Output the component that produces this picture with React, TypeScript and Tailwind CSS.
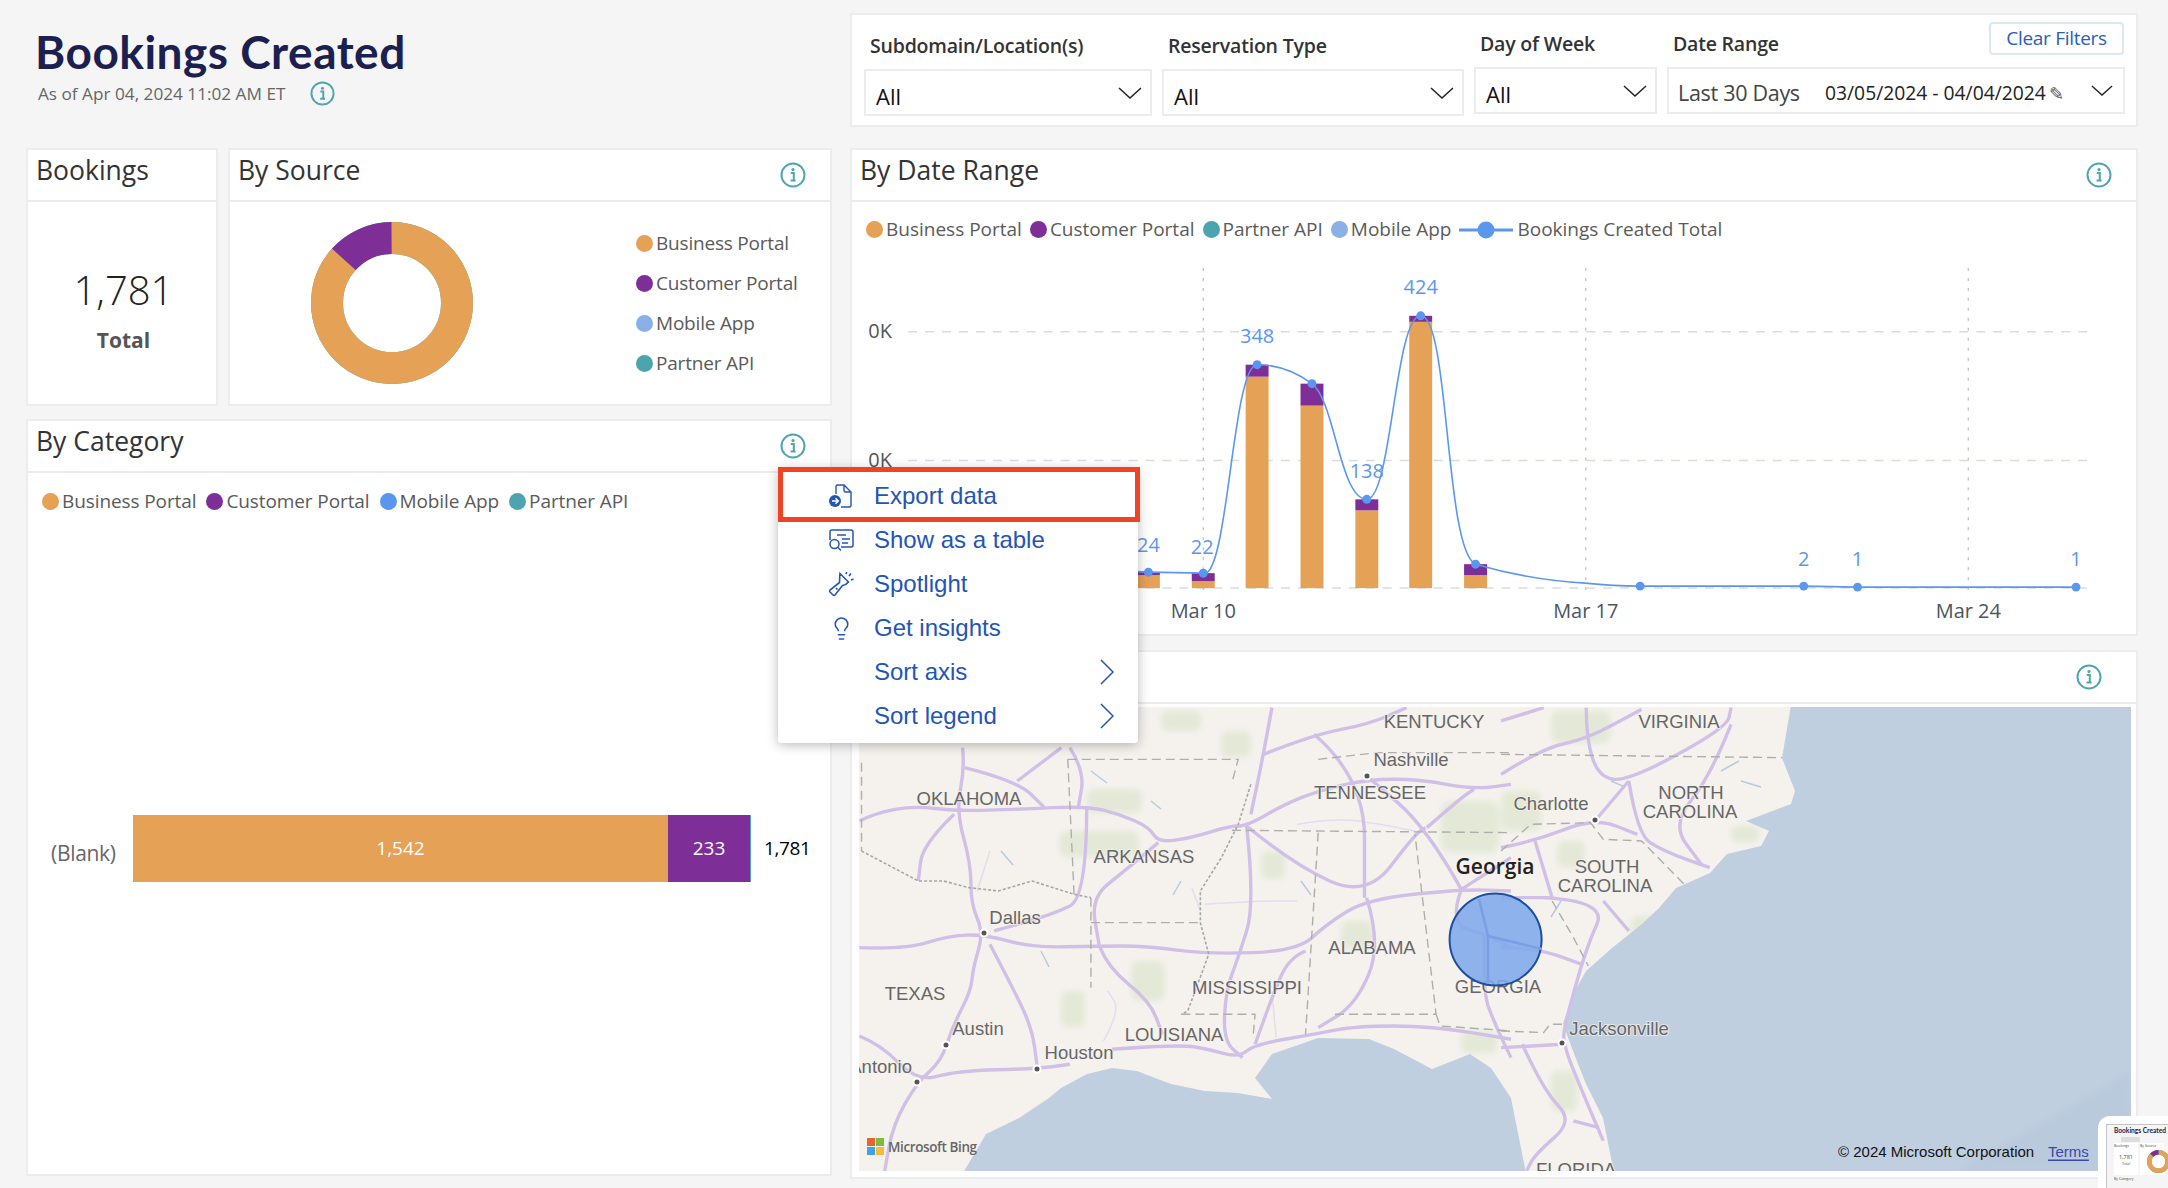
import { Lightbulb } from "lucide-react";

const ORANGE = "#e5a156";
const PURPLE = "#7e2e97";
const TEAL = "#4ca5ae";
const LINE = "#5b97ef";

function InfoIcon({ className }: { className?: string }) {
  return (
    <svg viewBox="0 0 26 26" className={className} fill="none">
      <circle cx="13" cy="13" r="11.5" stroke="#4fa3b5" strokeWidth="2" />
      <circle cx="13" cy="7.6" r="1.6" fill="#4fa3b5" />
      <path d="M10.8 11h3v7.2M10.6 18.4h5" stroke="#4fa3b5" strokeWidth="2" />
    </svg>
  );
}

function Chevron({ className }: { className?: string }) {
  return (
    <svg viewBox="0 0 24 12" className={className} fill="none">
      <path d="M1 1l11 10L23 1" stroke="#222" strokeWidth="1.5" />
    </svg>
  );
}

function LegendItem({ color, label }: { color: string; label: string }) {
  return (
    <div className="flex items-center gap-[3px]">
      <span className="w-[17px] h-[17px] rounded-full" style={{ background: color }} />
      <span>{label}</span>
    </div>
  );
}

function PanelHeader({ title, info }: { title: string; info?: boolean }) {
  return (
    <div className="h-[52px] shrink-0 border-b-2 border-[#ececec] flex items-center justify-between pl-[8px] pr-[24px]">
      <span className="text-[26.5px] leading-none text-[#333] -mt-[9px]">{title}</span>
      {info && <InfoIcon className="w-[26px] h-[26px]" />}
    </div>
  );
}

function FilterSelect({ label, width, top }: { label: string; width: string; top: string }) {
  return (
    <div className={`${width} ${top}`}>
      <div className="pl-[6px] h-[33px] text-[19.5px] leading-[28px] font-semibold text-[#333] tracking-[-0.2px]">{label}</div>
      <div className="mt-[4px] h-[47px] bg-white border-2 border-[#ececec] flex items-center justify-between pl-[10px] pr-[8px]">
        <span className="text-[22px] text-[#111] mt-[7px]">All</span>
        <Chevron className="w-[24px] h-[12px]" />
      </div>
    </div>
  );
}

// road and border lines are written in the crop coordinates of each half of the map
const westRoads = [
  "M20 390L60 365 150 345 250 360 400 355 560 345 640 370 710 410 730 455 810 440 900 405 940 405 1030 340 1110 300 1227 265 1350 265 1480 295 1568 280",
  "M265 170L270 230 250 360 285 520 285 640 315 725 290 830 285 900 240 1010 215 1110 158 1173 100 1300 80 1440",
  "M270 230L395 270 460 350M395 270L500 170M245 370L170 460 160 570",
  "M20 770L130 775 230 735 315 730 430 770 590 765 700 765 850 790 1060 780 1130 700 1225 625 1450 595 1568 600",
  "M330 760L380 880 430 1010 443 1133M20 1035L70 1060 158 1173 250 1140 443 1133 520 1120",
  "M620 1075L780 1060 850 1075 920 1100 960 1060 1100 1030 1200 1005 1380 1005 1568 1045",
  "M590 765L610 830 710 930 740 1030M940 405L960 640 920 800 890 900 885 1050 930 1100",
  "M940 405L1050 520 1225 620 1340 430 1365 410M1225 620L1260 760 1200 940 1110 1010",
  "M980 190L1100 130 1230 100 1320 50M1100 130L1220 260 1220 620M1000 50L980 190 950 370",
  "M1450 595L1368 410 1230 260M1368 410L1450 320 1480 295M1450 595L1568 500M1450 595L1420 700 1510 730 1568 770",
  "M560 345L560 620 480 670 340 720M730 455L650 540 570 620 590 765M520 170L555 240 540 350",
  "M1080 780L1040 800 1000 920 960 1060M1505 730L1500 900 1530 1000 1568 1100",
];
const eastRoads = [
  "M0 250L100 170 200 145 330 55M200 50L200 145 230 260 300 270 530 110 540 50M300 270L320 430 380 480 490 530",
  "M220 390L300 270M0 470L80 450 220 380 320 430M100 620L250 630 200 770 150 1000 145 1060 200 1230 240 1350",
  "M0 620L120 620M0 770L80 770 190 820M0 1070L145 1060M50 1060L100 1200 170 1290 80 1390 60 1440M170 1290L230 1310",
  "M240 630L300 720M540 100L490 260 400 400 470 520M80 450L120 620M0 90L100 50",
];
const thinRoads = [
  "M840 640L960 630 1060 630M1060 400L1150 380 1260 400 1340 420M330 480L300 600M810 590L830 660",
  "M600 1050L640 960 610 900M1000 900L1010 1040",
];
const westBorders = [
  "M25 215L25 480M515 205L920 205 905 275M515 205L530 610M570 620L570 890M570 695L830 695",
  "M785 970L960 970 955 1040M905 418L1100 420 1568 425M1110 425L1080 1030M1150 970L1390 970 1340 430M1390 970L1400 1005 1568 1020M1110 205L1250 185 1568 185",
];
const westRivers = [
  "M25 480L100 530 160 570 220 570 280 590 350 600 430 570 530 610 570 620",
  "M950 280L920 400 880 500 830 600 830 695 850 790 800 960 785 970",
];
const eastBorders = [
  "M0 190L660 200M0 480L70 400 210 395 240 445 330 450 430 580M120 630L170 740 205 825M0 1020L100 1025 115 1000 145 1000",
];

// turns a polyline into a rounded path, so the roads bend instead of kinking
function smooth(d: string) {
  return d
    .split("M")
    .filter(Boolean)
    .map((part) => {
      const nums = part.replace("L", " ").trim().split(/\s+/).map(Number);
      const pts: number[][] = [];
      for (let i = 0; i < nums.length; i += 2) pts.push([nums[i], nums[i + 1]]);
      let out = `M${pts[0][0]} ${pts[0][1]}`;
      for (let i = 1; i < pts.length - 1; i++) {
        const mx = (pts[i][0] + pts[i + 1][0]) / 2;
        const my = (pts[i][1] + pts[i + 1][1]) / 2;
        out += `Q${pts[i][0]} ${pts[i][1]} ${mx} ${my}`;
      }
      const last = pts[pts.length - 1];
      return `${out}L${last[0]} ${last[1]}`;
    })
    .join("");
}

function MapLabel({ x, y, children, anchor = "middle" }: { x: number; y: number; children: string; anchor?: "middle" | "end" | "start" }) {
  return (
    <text x={x} y={y} textAnchor={anchor} dominantBaseline="central" fontSize="18.5" fill="#666" stroke="#f5f2ee" strokeOpacity="0.7" strokeWidth="2" paintOrder="stroke" fontFamily="'Liberation Sans', sans-serif">
      {children}
    </text>
  );
}

function CityDot({ x, y }: { x: number; y: number }) {
  return <circle cx={x} cy={y} r="3.5" fill="#555" stroke="#fff" strokeWidth="2" />;
}

function MapDrawing() {
  return (
    <svg viewBox="858 706 1272 464" className="w-full h-full block">
      <defs>
        <filter id="soft" x="-5%" y="-5%" width="110%" height="110%">
          <feGaussianBlur stdDeviation="0.7" />
        </filter>
        <filter id="softer" x="-20%" y="-20%" width="140%" height="140%">
          <feGaussianBlur stdDeviation="3" />
        </filter>
      </defs>
      <rect x="858" y="706" width="1272" height="464" fill="#f5f2ee" />
      <g fill="#e3e9d6" filter="url(#softer)">
        <rect x="1086" y="788" width="55" height="24" rx="6" />
        <rect x="1058" y="830" width="80" height="26" rx="8" />
        <rect x="1160" y="710" width="40" height="20" rx="6" />
        <rect x="1220" y="730" width="30" height="26" rx="6" />
        <rect x="1060" y="990" width="24" height="36" rx="6" />
        <rect x="1130" y="960" width="34" height="40" rx="8" />
        <rect x="1260" y="850" width="24" height="28" rx="6" />
        <rect x="1340" y="920" width="32" height="28" rx="6" />
        <rect x="1440" y="800" width="58" height="52" rx="10" />
        <rect x="1500" y="790" width="40" height="40" rx="8" />
        <rect x="1550" y="710" width="60" height="32" rx="8" />
        <rect x="1556" y="840" width="28" height="26" rx="6" />
        <rect x="1630" y="915" width="26" height="24" rx="6" />
        <rect x="1730" y="825" width="28" height="16" rx="5" />
        <rect x="1550" y="1070" width="26" height="40" rx="6" />
        <rect x="1460" y="1030" width="36" height="22" rx="6" />
      </g>
      <path
        fill="#c0cfe0"
        filter="url(#soft)"
        d="M962 1172L985 1133 1018 1117 1048 1097 1060 1087 1086 1073 1111 1067 1136 1070 1170 1083 1204 1090 1237 1092 1271 1098 1254 1077 1271 1053 1317 1037 1368 1038 1393 1048 1431 1068 1469 1053 1490 1067 1510 1097 1525 1172 1613 1172 1602 1117 1585 1083 1572 1050 1562 1023 1570 997 1585 970 1611 947 1641 923 1658 907 1675 887 1709 872 1726 853 1760 845 1768 830 1745 820 1790 803 1794 790 1781 757 1790 704 2132 704 2132 1172Z"
      />
      <path fill="#b5c6da" fillOpacity="0.5" filter="url(#softer)" d="M1950 1172L2130 1070 2130 1172Z" />
      <g fill="none" stroke="#b5cbe2" strokeWidth="1.5" filter="url(#soft)">
        <path d="M1090 770l16 12M1150 800l10 8M1000 850l12 14M1040 950l8 16M1300 880l10 14M1720 770l18 -10M1740 780l20 6M1120 720l14 10M1180 880l-8 14M1610 780l14 6M1560 900l-10 16" />
      </g>
      <g transform="translate(850 690) scale(0.4209 0.3333)" fill="none" filter="url(#soft)" strokeLinejoin="round">
        {thinRoads.map((d) => (
          <path key={d} d={smooth(d)} stroke="#e6daf0" strokeWidth="1.5" vectorEffect="non-scaling-stroke" />
        ))}
        {westRoads.map((d) => (
          <path key={d} d={smooth(d)} stroke="#d0c0e7" strokeWidth="3.4" vectorEffect="non-scaling-stroke" />
        ))}
        {westBorders.map((d) => (
          <path key={d} d={d} stroke="#aeaeaa" strokeWidth="1.4" strokeDasharray="9 5" vectorEffect="non-scaling-stroke" />
        ))}
        {westRivers.map((d) => (
          <path key={d} d={d} stroke="#a4a8a4" strokeWidth="1.6" strokeDasharray="3 2" vectorEffect="non-scaling-stroke" />
        ))}
      </g>
      <g transform="translate(1500 690) scale(0.4261 0.3333)" fill="none" filter="url(#soft)" strokeLinejoin="round">
        {eastRoads.map((d) => (
          <path key={d} d={smooth(d)} stroke="#d0c0e7" strokeWidth="3.4" vectorEffect="non-scaling-stroke" />
        ))}
        {eastBorders.map((d) => (
          <path key={d} d={d} stroke="#aeaeaa" strokeWidth="1.4" strokeDasharray="9 5" vectorEffect="non-scaling-stroke" />
        ))}
      </g>
      <CityDot x={1366} y={775} />
      <CityDot x={983} y={932} />
      <CityDot x={945} y={1044} />
      <CityDot x={1036} y={1068} />
      <CityDot x={916} y={1081} />
      <CityDot x={1594} y={819} />
      <CityDot x={1561} y={1042} />
      <MapLabel x={1433} y={720}>KENTUCKY</MapLabel>
      <MapLabel x={1410} y={758}>Nashville</MapLabel>
      <MapLabel x={1369} y={791}>TENNESSEE</MapLabel>
      <MapLabel x={968} y={797}>OKLAHOMA</MapLabel>
      <MapLabel x={1143} y={855}>ARKANSAS</MapLabel>
      <MapLabel x={1014} y={916}>Dallas</MapLabel>
      <MapLabel x={1371} y={946}>ALABAMA</MapLabel>
      <MapLabel x={914} y={992}>TEXAS</MapLabel>
      <MapLabel x={1246} y={986}>MISSISSIPPI</MapLabel>
      <MapLabel x={1497} y={985}>GEORGIA</MapLabel>
      <MapLabel x={977} y={1027}>Austin</MapLabel>
      <MapLabel x={1173} y={1033}>LOUISIANA</MapLabel>
      <MapLabel x={1078} y={1051}>Houston</MapLabel>
      <MapLabel x={911} y={1065} anchor="end">San Antonio</MapLabel>
      <MapLabel x={1678} y={720}>VIRGINIA</MapLabel>
      <MapLabel x={1550} y={802}>Charlotte</MapLabel>
      <MapLabel x={1690} y={791}>NORTH</MapLabel>
      <MapLabel x={1689} y={810}>CAROLINA</MapLabel>
      <MapLabel x={1606} y={865}>SOUTH</MapLabel>
      <MapLabel x={1604} y={884}>CAROLINA</MapLabel>
      <MapLabel x={1618} y={1027}>Jacksonville</MapLabel>
      <MapLabel x={1575} y={1168}>FLORIDA</MapLabel>
      <text x={1494} y={865} textAnchor="middle" dominantBaseline="central" fontSize="21" fontWeight="600" fill="#222" fontFamily="'Open Sans', sans-serif">
        Georgia
      </text>
      <circle cx="1494.6" cy="938.5" r="46" fill="#7fa8ea" fillOpacity="0.88" stroke="#1d4f9e" strokeWidth="2" />
      <path d="M1478 898L1487 935 1487 983M1487 935L1541 948" fill="none" stroke="#7a9fe4" strokeWidth="2.5" />
      <rect x="866" y="1137" width="8" height="8" fill="#e2672f" />
      <rect x="875" y="1137" width="8" height="8" fill="#7fba42" />
      <rect x="866" y="1146" width="8" height="8" fill="#3fa4e6" />
      <rect x="875" y="1146" width="8" height="8" fill="#f6bb3a" />
      <text x="887" y="1146" dominantBaseline="central" fontSize="13.5" fontWeight="600" letterSpacing="-0.4" fill="#666" fontFamily="'Open Sans', sans-serif">
        Microsoft Bing
      </text>
      <text x="1837" y="1150" dominantBaseline="central" fontSize="15" fill="#111" fontFamily="'Liberation Sans', sans-serif">
        © 2024 Microsoft Corporation
      </text>
      <text x="2047" y="1150" dominantBaseline="central" fontSize="15" fill="#3a46a8" textDecoration="underline" fontFamily="'Liberation Sans', sans-serif">
        Terms
      </text>
    </svg>
  );
}

const bars = [
  { x: 1148, top: 572, split: 575 },
  { x: 1203, top: 573, split: 581 },
  { x: 1257, top: 364, split: 376 },
  { x: 1312, top: 383, split: 405 },
  { x: 1367, top: 499, split: 510 },
  { x: 1421, top: 315, split: 321 },
  { x: 1476, top: 564, split: 575 },
];

const points = [
  [1148, 572],
  [1203, 573],
  [1257, 364],
  [1312, 383],
  [1367, 499],
  [1421, 315],
  [1476, 564],
  [1641, 586],
  [1805, 586],
  [1859, 587],
  [2078, 587],
];

const dataLabels = [
  { x: 1148, y: 544, t: "24" },
  { x: 1202, y: 546, t: "22" },
  { x: 1257, y: 335, t: "348" },
  { x: 1367, y: 470, t: "138" },
  { x: 1421, y: 286, t: "424" },
  { x: 1805, y: 558, t: "2" },
  { x: 1859, y: 558, t: "1" },
  { x: 2078, y: 558, t: "1" },
];

function DateChart() {
  return (
    <svg viewBox="853 245 1283 389" className="w-full h-[389px] block" fontFamily="'Open Sans', sans-serif">
      {[331, 460, 588].map((y) => (
        <line key={y} x1="907" x2="2093" y1={y} y2={y} stroke="#d9dce4" strokeWidth="1.5" strokeDasharray="9 8" />
      ))}
      {[1203, 1586.5, 1970].map((x) => (
        <line key={x} x1={x} x2={x} y1="267" y2="593" stroke="#bdbdbd" strokeWidth="1.2" strokeDasharray="3 7" />
      ))}
      {bars.map((b) => (
        <g key={b.x}>
          <rect x={b.x - 11.5} y={b.split} width="23" height={588 - b.split} fill={ORANGE} />
          <rect x={b.x - 11.5} y={b.top} width="23" height={b.split - b.top} fill={PURPLE} />
        </g>
      ))}
      <path
        fill="none"
        stroke={LINE}
        strokeWidth="1.6"
        d="M1120 571L1148 572 1203 573C1228 580 1232 364 1257 364C1277 364 1297 372 1312 383C1335 400 1340 499 1367 499C1392 499 1395 315 1421 315C1450 315 1445 550 1476 564C1510 574 1550 581 1586 583C1605 585 1620 586 1641 586L1805 586 1859 587 2078 587"
      />
      {points.map(([x, y]) => (
        <circle key={x} cx={x} cy={y} r="4.5" fill={LINE} />
      ))}
      {dataLabels.map((l) => (
        <text key={l.x} x={l.x} y={l.y} textAnchor="middle" dominantBaseline="central" fontSize="20" fill={LINE}>
          {l.t}
        </text>
      ))}
      <text x="879" y="330" textAnchor="middle" dominantBaseline="central" fontSize="20" fill="#555">0K</text>
      <text x="879" y="459" textAnchor="middle" dominantBaseline="central" fontSize="20" fill="#555">0K</text>
      <text x="1203" y="610" textAnchor="middle" dominantBaseline="central" fontSize="20" fill="#4a5560">Mar 10</text>
      <text x="1586.5" y="610" textAnchor="middle" dominantBaseline="central" fontSize="20" fill="#4a5560">Mar 17</text>
      <text x="1970" y="610" textAnchor="middle" dominantBaseline="central" fontSize="20" fill="#4a5560">Mar 24</text>
    </svg>
  );
}

function Donut({ className }: { className: string }) {
  const r = 65;
  const c = 2 * Math.PI * r;
  const orange = c * (1542 / 1781);
  const purple = c * (233 / 1781);
  return (
    <svg viewBox="0 0 162 162" className={className}>
      <g transform="rotate(-90 81 81)" fill="none" strokeWidth="32">
        <circle cx="81" cy="81" r={r} stroke={TEAL} />
        <circle cx="81" cy="81" r={r} stroke={ORANGE} strokeDasharray={`${orange} ${c}`} />
        <circle cx="81" cy="81" r={r} stroke={PURPLE} strokeDasharray={`${purple} ${c}`} strokeDashoffset={-orange} />
      </g>
    </svg>
  );
}

function MenuIcon({ kind }: { kind: string }) {
  if (kind === "export") {
    return (
      <svg viewBox="0 0 26 26" className="w-[26px] h-[26px]" fill="none" stroke="#2255b5" strokeWidth="1.4">
        <path d="M8 11V3.5a1.5 1.5 0 011.5-1.5H16l7 7v13.5a1.5 1.5 0 01-1.5 1.5H13M16 2v5.5A1.5 1.5 0 0017.5 9H23" />
        <circle cx="7" cy="18" r="6" fill="#2255b5" stroke="none" />
        <path d="M4 18h6M7.5 15.2L10.3 18l-2.8 2.8" stroke="#fff" strokeWidth="1.5" />
      </svg>
    );
  }
  if (kind === "table") {
    return (
      <svg viewBox="0 0 26 24" className="w-[26px] h-[24px]" fill="none" stroke="#2255b5" strokeWidth="1.5">
        <path d="M2 12V4a2 2 0 012-2h19a2 2 0 012 2v13a2 2 0 01-2 2H13" />
        <path d="M9 7h9M14 11h8M14 15h6" />
        <circle cx="6.5" cy="16" r="4.5" />
        <path d="M10 19.5l3 3" />
      </svg>
    );
  }
  if (kind === "spot") {
    return (
      <svg viewBox="0 0 26 26" className="w-[26px] h-[26px]" fill="none" stroke="#2255b5" strokeWidth="1.6">
        <path d="M12 2.5l8.5 8.5c-1.5 2-3.5 3-6 3.5L7 24a1.5 1.5 0 01-2 0l-3-3a1.5 1.5 0 010-2l9.5-7.5c.3-3 0-6 .5-9z" />
        <path d="M21 5l2-2.5M23 9l2.5-1M18 3l.8-2" />
        <path d="M8 17l1.5 1.5" />
      </svg>
    );
  }
  return <Lightbulb className="w-[25px] h-[25px] ml-[1px] text-[#2255b5]" strokeWidth={1.5} />;
}

const menuItems = [
  { label: "Export data", icon: "export" },
  { label: "Show as a table", icon: "table" },
  { label: "Spotlight", icon: "spot" },
  { label: "Get insights", icon: "bulb" },
  { label: "Sort axis", more: true },
  { label: "Sort legend", more: true },
];

function ContextMenu() {
  return (
    <div className="absolute left-[778px] top-[468px] w-[360px] bg-white rounded-[3px] shadow-[0_2px_12px_rgba(0,0,0,0.28)] pt-[6px] pb-[5px] font-['Liberation_Sans',sans-serif] text-[24px] text-[#2255b5]">
      {menuItems.map((m) => (
        <div key={m.label} className="h-[44px] flex items-center">
          <div className="w-[96px] pl-[50px] flex justify-start">{m.icon && <MenuIcon kind={m.icon} />}</div>
          <span className="flex-1">{m.label}</span>
          {m.more && (
            <svg viewBox="0 0 14 26" className="w-[14px] h-[26px] mr-[24px]" fill="none" stroke="#2255b5" strokeWidth="1.5">
              <path d="M1 1l12 12L1 25" />
            </svg>
          )}
        </div>
      ))}
      <div className="absolute left-0 -top-[1px] w-[362px] h-[55px] border-[5px] border-[#ee4324]" />
    </div>
  );
}

function Thumbnail() {
  return (
    <div className="absolute left-[2098px] top-[1116px] w-[70px] h-[72px] overflow-hidden bg-white rounded-tl-[12px] pl-[8px] pt-[8px]">
      <div className="w-[62px] h-[64px] bg-[#f5f5f5] border-l border-t border-[#c4c4c4] pl-[7px] pt-[1px] text-[#444] overflow-hidden">
        <div className="w-[50px] text-[6.6px] leading-[9px] font-bold text-[#1b2050] whitespace-nowrap font-['Lato',sans-serif]">Bookings Created</div>
        <div className="mt-[2px] ml-[7px] w-[19px] h-[5px] bg-[#ddd] rounded-[1px]" />
        <div className="mt-[1px] flex gap-[2px]">
          <div className="w-[24px] h-[32px] bg-white text-center">
            <div className="text-[3.5px] leading-[5px] text-left">Bookings</div>
            <div className="mt-[6px] text-[5.5px] leading-[7px]">1,781</div>
            <div className="text-[3.5px] leading-[5px]">Total</div>
          </div>
          <div className="w-[24px] h-[32px] bg-white relative">
            <div className="text-[3.5px] leading-[5px]">By Source</div>
            <Donut className="absolute left-[7px] top-[7px] w-[23px] h-[23px]" />
          </div>
        </div>
        <div className="mt-[1px] text-[3.5px] leading-[5px]">By Category</div>
      </div>
    </div>
  );
}

export default function App() {
  return (
    <div className="relative w-[2168px] h-[1188px] overflow-hidden bg-[#f5f5f5] pl-[26px] flex gap-[18px] font-['Open_Sans',sans-serif] text-[#333]">
      {/* left column */}
      <div className="w-[806px] shrink-0">
        <div className="h-[148px] pt-[24px] pl-[9px]">
          <h1 className="text-[46px] leading-[56px] font-bold tracking-[0.5px] text-[#1b2050] font-['Lato',sans-serif]">Bookings Created</h1>
          <div className="mt-[1px] pl-[3px] flex items-center gap-[25px] text-[17.2px] text-[#666]">
            <span>As of Apr 04, 2024 11:02 AM ET</span>
            <InfoIcon className="w-[25px] h-[25px]" />
          </div>
        </div>

        <div className="flex gap-[10px] h-[258px]">
          <div className="w-[192px] bg-white border-2 border-[#ececec] flex flex-col">
            <PanelHeader title="Bookings" />
            <div className="flex-1 flex flex-col items-center text-center pt-[61px] pl-[3px]">
              <div className="text-[40px] leading-[54px] font-light text-[#222]">1,781</div>
              <div className="mt-[8px] text-[21px] font-bold text-[#555] leading-[30px]">Total</div>
            </div>
          </div>
          <div className="flex-1 bg-white border-2 border-[#ececec] flex flex-col">
            <PanelHeader title="By Source" info />
            <div className="flex-1 flex items-center">
              <div className="ml-[81px] -mt-[1px]"><Donut className="w-[162px] h-[162px]" /></div>
              <div className="ml-[163px] flex flex-col gap-[15px] text-[19px] leading-[25px] text-[#5a5a5a] tracking-[-0.2px]">
                <LegendItem color={ORANGE} label="Business Portal" />
                <LegendItem color={PURPLE} label="Customer Portal" />
                <LegendItem color="#8bb0e8" label="Mobile App" />
                <LegendItem color={TEAL} label="Partner API" />
              </div>
            </div>
          </div>
        </div>

        <div className="mt-[13px] h-[757px] bg-white border-2 border-[#ececec] flex flex-col">
          <PanelHeader title="By Category" info />
          <div className="pt-[16px] pl-[14px] flex gap-[10px] text-[19px] leading-[25px] text-[#5a5a5a] tracking-[-0.1px]">
            <LegendItem color={ORANGE} label="Business Portal" />
            <LegendItem color={PURPLE} label="Customer Portal" />
            <LegendItem color="#5a96ee" label="Mobile App" />
            <LegendItem color={TEAL} label="Partner API" />
          </div>
          <div className="mt-[301px] flex items-center h-[67px] pl-[23px] text-[19px]">
            <span className="w-[82px] text-[#666] text-[21px] mt-[10px] tracking-[-0.3px]">(Blank)</span>
            <div className="w-[535px] h-full bg-[#e5a156] flex items-center justify-center text-white">1,542</div>
            <div className="w-[82px] h-full bg-[#7e2e97] flex items-center justify-center text-white">233</div>
            <div className="w-[1px] h-full bg-[#4ca5ae]" />
            <span className="ml-[13px] text-black tracking-[-0.4px]">1,781</span>
          </div>
        </div>
      </div>

      {/* right column */}
      <div className="w-[1288px] shrink-0 pt-[13px]">
        <div className="h-[114px] bg-white border-2 border-[#ececec] relative flex gap-[10px] pl-[12px] pt-[17px]">
          <FilterSelect label="Subdomain/Location(s)" width="w-[288px]" top="mt-0" />
          <FilterSelect label="Reservation Type" width="w-[302px]" top="mt-0" />
          <FilterSelect label="Day of Week" width="w-[183px]" top="-mt-[2px]" />
          <div className="w-[458px] -mt-[2px]">
            <div className="pl-[6px] h-[33px] text-[19.5px] leading-[28px] font-semibold text-[#333] tracking-[-0.2px]">Date Range</div>
            <div className="mt-[4px] h-[47px] bg-white border-2 border-[#ececec] flex items-center pl-[9px] pr-[10px]">
              <span className="text-[21.5px] text-[#444] w-[147px] tracking-[-0.3px] whitespace-nowrap mt-[6px]">Last 30 Days</span>
              <span className="text-[19.3px] text-[#222] whitespace-nowrap mt-[6px]">03/05/2024 - 04/04/2024</span>
              <span className="ml-[3px] text-[18px] text-[#555] mt-[6px]">✎</span>
              <Chevron className="ml-auto w-[22px] h-[11px]" />
            </div>
          </div>
          <button className="absolute right-[12px] top-[7px] w-[135px] h-[33px] border-2 border-[#dbe7f7] rounded-[4px] text-[19px] text-[#2b5cb8] tracking-[-0.3px]">
            Clear Filters
          </button>
        </div>

        <div className="mt-[21px] h-[488px] bg-white border-2 border-[#ececec] flex flex-col">
          <PanelHeader title="By Date Range" info />
          <div className="h-[44px] shrink-0 pt-[11px] pl-[14px] flex gap-[8px] text-[19px] leading-[25px] text-[#5a5a5a]">
            <LegendItem color={ORANGE} label="Business Portal" />
            <LegendItem color={PURPLE} label="Customer Portal" />
            <LegendItem color={TEAL} label="Partner API" />
            <LegendItem color="#8bb0e8" label="Mobile App" />
            <div className="flex items-center gap-[4px]">
              <svg viewBox="0 0 54 18" className="w-[54px] h-[18px]">
                <rect y="7.5" width="54" height="3" fill={LINE} />
                <circle cx="27" cy="9" r="8.5" fill={LINE} />
              </svg>
              <span>Bookings Created Total</span>
            </div>
          </div>
          <DateChart />
        </div>

        <div className="mt-[14px] h-[529px] bg-white border-2 border-[#ececec] flex flex-col">
          <div className="h-[52px] shrink-0 border-b-2 border-[#ececec] flex items-center justify-end pr-[34px]">
            <InfoIcon className="w-[26px] h-[26px]" />
          </div>
          <div className="h-[464px] ml-[7px] mr-[5px] mt-[3px]">
            <MapDrawing />
          </div>
        </div>
      </div>

      <ContextMenu />
      <Thumbnail />
    </div>
  );
}
